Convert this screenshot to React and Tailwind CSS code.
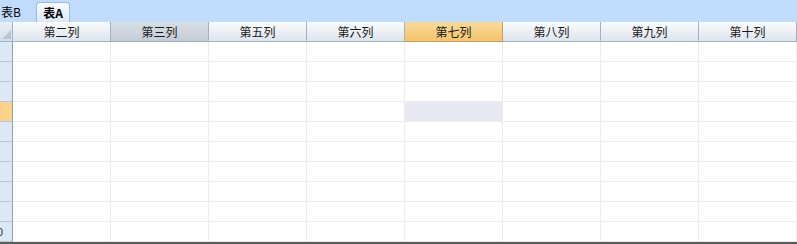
import React from "react";

const cols = ["第二列", "第三列", "第五列", "第六列", "第七列", "第八列", "第九列", "第十列"];
const rows = [1, 2, 3, 4, 5, 6, 7, 8, 9, 10];

export default function App() {
  const font = { fontFamily: '"Noto Sans CJK SC", "DejaVu Sans", sans-serif' };
  return (
    <div className="w-[797px] h-[244px] overflow-hidden bg-white flex flex-col" style={font}>
      {/* tab bar */}
      <div className="h-[22px] bg-[#c0dbfb] flex items-end shrink-0">
        <div className="h-[20px] w-[36px] flex items-center pl-[1px] text-[12px] leading-none text-black">表B</div>
        <div className="h-[20px] w-[34px] rounded-t-[4px] border border-b-0 border-[#9bbbe2] bg-gradient-to-b from-[#f7fbff] to-[#dce9f8] flex items-center justify-center text-[12px] font-bold leading-none text-black">表A</div>
      </div>
      {/* header */}
      <div className="flex h-[20px] shrink-0">
        <div className="w-[13px] h-full relative bg-gradient-to-b from-[#e9eef6] to-[#d5dfec] border-r border-b border-[#9eb2c8] overflow-hidden">
          <div className="absolute right-[1px] bottom-[2px] w-0 h-0 border-l-[9px] border-l-transparent border-b-[9px] border-b-[#b8c4d2]" />
        </div>
        {cols.map((c, i) => {
          const cls =
            i === 4
              ? "bg-gradient-to-b from-[#f9d99a] to-[#f4c46c] border-[#c9a060]"
              : i === 1
              ? "bg-gradient-to-b from-[#d9dee5] to-[#c4ccd6] border-[#9eb2c8]"
              : "bg-gradient-to-b from-[#fbfcfd] to-[#dde4ed] border-[#9eb2c8]";
          return (
            <div
              key={c}
              className={`w-[98px] h-full border-r border-b flex items-center justify-center text-[12px] leading-none text-[#1a1a1a] ${cls}`}
            >
              {c}
            </div>
          );
        })}
      </div>
      {/* body */}
      {rows.map((r) => (
        <div key={r} className="flex h-[20px] shrink-0">
          <div
            className={`w-[13px] h-full border-r border-b border-r-[#8d9fb6] border-b-[#b5c6da] overflow-hidden flex items-center justify-end text-[11px] leading-none text-[#333] ${
              r === 4 ? "bg-[#fbd28a]" : "bg-[#dde8f6]"
            }`}
          >
            {r === 10 ? <span className="mr-[9px]">10</span> : null}
          </div>
          {cols.map((c, i) => (
            <div
              key={c}
              className={`w-[98px] h-full border-r border-b border-[#ececec] ${
                r === 4 && i === 4 ? "bg-[#e8e8f2]" : "bg-white"
              }`}
            />
          ))}
        </div>
      ))}
      <div className="h-[2px] bg-[#5a5a5a] shrink-0" />
    </div>
  );
}
